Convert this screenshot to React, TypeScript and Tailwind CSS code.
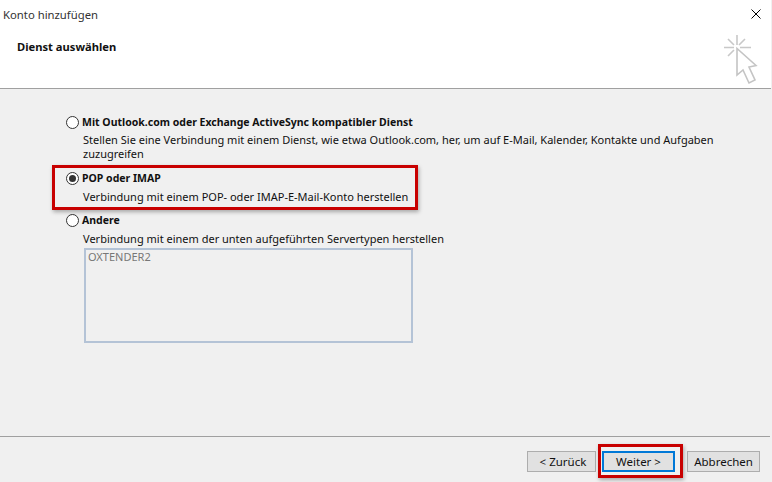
const font = { fontFamily: '"Noto Sans", "Open Sans", sans-serif' };

function Radio({ checked = false }: { checked?: boolean }) {
  return (
    <span className="relative flex h-[13px] w-[13px] shrink-0 items-center justify-center rounded-full border border-[#333] bg-white">
      {checked && <span className="h-[7px] w-[7px] rounded-full bg-[#333]" />}
    </span>
  );
}

function CloseIcon() {
  return (
    <svg width="10" height="10" viewBox="0 0 10 10" fill="none" stroke="#000" strokeWidth="1">
      <path d="M0.500 0.500l9 9M9.500 0.500l-9 9" />
    </svg>
  );
}

function CursorIcon() {
  return (
    <svg width="40" height="54" viewBox="30 32 40 54" fill="none">
      <path d="M47 35v10M34 47.500h10M50 47.500h11M38 39l6 6M55 39l-6 6M38 56l6-6" stroke="#c8c8c8" strokeWidth="1.600" />
      <path d="M47 48.500V75l6-5 6 13 6-3-6-13 7-1.500z" fill="#fff" stroke="#c4c4c4" strokeWidth="1.600" />
    </svg>
  );
}

export default function App() {
  return (
    <div className="relative flex h-[482px] w-[772px] flex-col overflow-hidden bg-[#f0f0f0] text-[11px] text-[#111]" style={font}>
      {/* Kopfbereich */}
      <div className="flex h-[89px] w-[771px] border-b border-[#a0a0a0] bg-white">
        <div className="flex-1">
          <p className="pl-[3px] pt-[7px] text-[11.300px] leading-[16px] text-[#333]">Konto hinzufügen</p>
          <h2 className="pl-[17px] pt-[16px] text-[11.200px] font-bold leading-[16px]">Dienst auswählen</h2>
        </div>
        <div className="flex w-[60px] flex-col items-end pr-[10px] pt-[9px]">
          <CloseIcon />
          <div className="mr-[1px] mt-[13px]">
            <CursorIcon />
          </div>
        </div>
      </div>

      {/* Optionen */}
      <div className="flex-1 pl-[66px] pt-[25px]">
        <div className="flex items-center gap-[3px] leading-[16px]">
          <Radio />
          <span className="text-[10.500px] font-bold">Mit Outlook.com oder Exchange ActiveSync kompatibler Dienst</span>
        </div>
        <p className="mt-[3px] w-[670px] pl-[17px] leading-[14px]">
          Stellen Sie eine Verbindung mit einem Dienst, wie etwa Outlook.com, her, um auf E-Mail, Kalender, Kontakte und Aufgaben zuzugreifen
        </p>

        <div className="mt-[9px] flex items-center gap-[3px] leading-[16px]">
          <Radio checked />
          <span className="text-[10.500px] font-bold">POP oder IMAP</span>
        </div>
        <p className="mt-[4px] pl-[17px] leading-[14px]">Verbindung mit einem POP- oder IMAP-E-Mail-Konto herstellen</p>

        <div className="mt-[8px] flex items-center gap-[3px] leading-[16px]">
          <Radio />
          <span className="text-[10.500px] font-bold">Andere</span>
        </div>
        <p className="mt-[4px] pl-[17px] leading-[14px]">Verbindung mit einem der unten aufgeführten Servertypen herstellen</p>
        <div className="ml-[18px] mt-[2px] h-[95px] w-[329px] border-2 border-[#b4c3d6] px-[2px] leading-[13px] text-[#777]">OXTENDER2</div>
      </div>

      {/* Fußzeile */}
      <div className="flex h-[46px] w-[770px] items-start justify-end border-t border-[#a0a0a0] pr-[10px] pt-[14px] text-[11.500px]">
        <button className="h-[21px] w-[69px] border border-[#adadad] bg-[#e1e1e1] pl-[3px] leading-[18px]">&lt; Zurück</button>
        <button className="ml-[6px] h-[21px] w-[73px] border-2 border-[#0078d7] bg-[#e1e1e1] leading-[16px]">Weiter &gt;</button>
        <button className="ml-[12px] h-[21px] w-[73px] border border-[#adadad] bg-[#e1e1e1] leading-[18px]">Abbrechen</button>
      </div>

      {/* rote Markierungen */}
      <div className="absolute left-[52px] top-[165px] h-[45px] w-[366px] border-[3px] border-[#c80000] shadow-[1px_2px_4px_rgba(0,0,0,0.3)]" />
      <div className="absolute left-[598px] top-[444px] h-[34px] w-[85px] border-[3px] border-[#c80000] shadow-[1px_2px_4px_rgba(0,0,0,0.3)]" />
    </div>
  );
}
